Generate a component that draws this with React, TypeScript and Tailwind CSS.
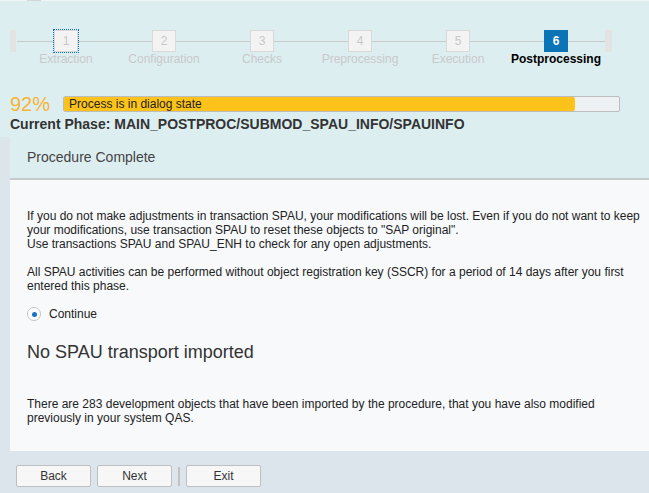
const steps = ['Extraction', 'Configuration', 'Checks', 'Preprocessing', 'Execution', 'Postprocessing'];

function Step({ n, label }: { n: number; label: string }) {
  const active = n === 6;
  const focused = n === 1;
  return (
    <div className="w-[98px] flex flex-col items-center">
      <div className="relative w-full h-[22px] flex justify-center">
        <div className="absolute left-0 right-0 top-[11px] h-px bg-[#c9c9c9]" />
        <div
          className={`relative w-[24px] h-[22px] flex items-center justify-center text-[12px] ${
            active
              ? 'bg-[#0b74b6] text-white font-bold'
              : 'bg-[#f3f3f3] border border-[#d9d9d9] text-[#c8c8c8]'
          } ${focused ? 'outline-1 outline-dotted outline-[#0a6ed1]' : ''}`}
        >
          {n}
        </div>
      </div>
      <div
        className={`pt-[1px] text-[12px] leading-[13px] whitespace-nowrap ${
          active ? 'text-black font-bold' : 'text-[#c9c9c9]'
        }`}
      >
        {label}
      </div>
    </div>
  );
}

function Btn({ children }: { children: string }) {
  return (
    <button className="w-[75px] h-[22px] bg-[#f7f7f7] border border-[#bfbfbf] rounded-[2px] text-[12px] text-[#333]">
      {children}
    </button>
  );
}

export default function App() {
  return (
    <div
      className="w-[649px] h-[493px] overflow-hidden bg-[#dde5ec] flex flex-col"
      style={{ fontFamily: '"Liberation Sans", Arial, sans-serif' }}
    >
      {/* stepper + progress */}
      <div className="bg-[#ddeef1]">
        <div className="h-px bg-[#eef6f8] relative">
          <div className="absolute left-[27px] w-[14px] h-px bg-[#d6d6d6]" />
        </div>
        <div className="flex items-start pl-[10px] pt-[29px]">
          <div className="w-[6px] h-[22px] bg-[#e3e3e3]" />
          <div className="w-px h-[22px]" />
          {steps.map((s, i) => (
            <Step key={s} n={i + 1} label={s} />
          ))}
          <div className="w-[7px] h-[22px] bg-[#e3e3e3]" />
        </div>

        <div className="pl-[10px] pt-[28px] pb-[5px]">
          <div className="flex items-center gap-[13px] h-[20px]">
            <span className="text-[20px] leading-[20px] text-[#f5b436]">92%</span>
            <div className="relative w-[557px] h-[16px] border border-[#bdbdbd] rounded-[2px] bg-[#edf1f3] overflow-hidden">
              <div className="h-full w-[92%] bg-[#fdc31b] rounded-r-[2px]" />
              <span className="absolute left-[5px] top-0 text-[12px] leading-[14px] text-[#222]">
                Process is in dialog state
              </span>
            </div>
          </div>
          <div className="text-[14px] leading-[16px] font-bold text-[#333] mt-[2px]">
            Current Phase: MAIN_POSTPROC/SUBMOD_SPAU_INFO/SPAUINFO
          </div>
        </div>
      </div>

      {/* procedure */}
      <div className="ml-[10px] flex flex-col">
        <div className="h-[43px] bg-[#ddeef1] border-b-2 border-[#c6c9cb] flex items-center pl-[17px] text-[14px] text-[#444]">
          Procedure Complete
        </div>
        <div className="h-[271px] bg-[#f7f9fb] pl-[17px] pt-[29px] text-[12px] leading-[14px] text-[#222]">
          <p>
            If you do not make adjustments in transaction SPAU, your modifications will be lost. Even if you do not want to keep
            <br />
            your modifications, use transaction SPAU to reset these objects to "SAP original".
            <br />
            Use transactions SPAU and SPAU_ENH to check for any open adjustments.
          </p>
          <p className="mt-[14px] w-[600px]">
            All SPAU activities can be performed without object registration key (SSCR) for a period of 14 days after you first entered this phase.
          </p>
          <div className="mt-[13px] flex items-center gap-[8px] h-[16px]">
            <div className="w-[14px] h-[14px] rounded-full border border-[#c4c4c4] bg-white flex items-center justify-center">
              <div className="w-[5px] h-[5px] rounded-full bg-[#1a73c4]" />
            </div>
            <span>Continue</span>
          </div>
          <div className="mt-[19px] text-[18px] leading-[22px] text-[#333]">No SPAU transport imported</div>
          <p className="mt-[34px] w-[590px]">
            There are 283 development objects that have been imported by the procedure, that you have also modified previously in your system QAS.
          </p>
        </div>
      </div>

      {/* footer */}
      <div className="flex items-center pl-[16px] pt-[14px]">
        <Btn>Back</Btn>
        <div className="w-[6px]" />
        <Btn>Next</Btn>
        <div className="w-[6px]" />
        <div className="w-[2px] h-[19px] bg-[#c2c2c2]" />
        <div className="w-[6px]" />
        <Btn>Exit</Btn>
      </div>
    </div>
  );
}
